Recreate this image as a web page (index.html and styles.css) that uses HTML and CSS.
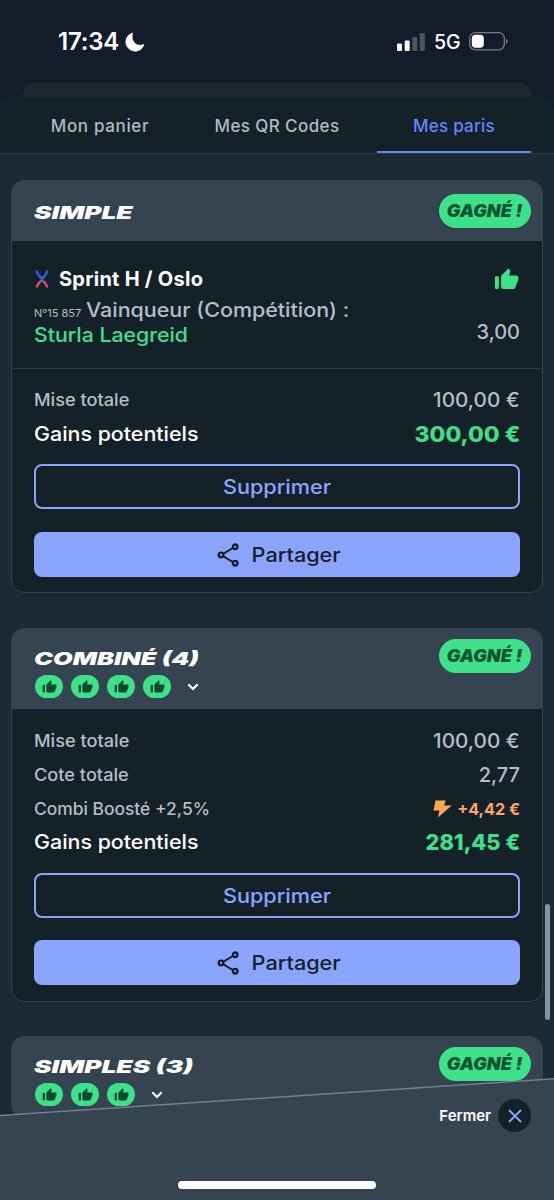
FILE: index.html
```html
<!DOCTYPE html>
<html lang="fr">
<head>
<meta charset="utf-8">
<title>Mes paris</title>
<link rel="stylesheet" href="styles.css">
</head>
<body>
<svg class="defs" width="0" height="0">
  <symbol id="thumb" viewBox="0 0 24 22"><path d="M2 8.2h1.2q1.2 0 1.2 1.2v10.4q0 1.2-1.2 1.2H1.600q-1.200 0-1.200-1.200V9.400q0-1.200 1.200-1.200zM6.600 8.800q0-1 .7-1.700L14 .5l1.200 1.200q.6.6.4 1.500l-.9 4.300h7q2.200 0 2.200 2.200v1.500q0 .5-.2 1l-3.100 7.500q-.6 1.300-2 1.300H8.800q-2.200 0-2.200-2.200z" fill="currentColor"/></symbol>
  <symbol id="share" viewBox="0 0 24 26"><path d="M6.500 11.700 15.700 6M6.500 14.300l9.200 5.700" fill="none" stroke="currentColor" stroke-width="2"/><g fill="none" stroke="currentColor" stroke-width="2.300"><circle cx="4" cy="13" r="2.300"/><circle cx="18.200" cy="4.800" r="2.300"/><circle cx="18.200" cy="21.200" r="2.300"/></g></symbol>
  <symbol id="chevron" viewBox="0 0 12 8"><path d="M1.300 1.300 6 6l4.700-4.700" fill="none" stroke="currentColor" stroke-width="2"/></symbol>
</svg>
<div class="screen">
  <header class="status">
    <span class="clock">17:34</span>
    <svg class="moon" width="20" height="20" viewBox="0 0 20 20"><path d="M7.600.9A9.300 9.300 0 1 0 19 12.600Q13 14.500 9.500 11 6 7.500 7.600.9z" fill="#fff" stroke="#fff" stroke-width=".6" stroke-linejoin="round"/></svg>
    <svg class="signal" width="28" height="18" viewBox="0 0 28 18"><g fill="#fff"><rect y="10.500" width="5" height="7.500" rx="1.300"/><rect x="7.700" y="7.500" width="5" height="10.500" rx="1.300"/><g opacity=".25"><rect x="15.300" y="4" width="5" height="14" rx="1.300"/><rect x="22.800" width="5" height="18" rx="1.300"/></g></g></svg>
    <span class="network">5G</span>
    <svg class="battery" width="39" height="19" viewBox="0 0 39 19"><rect x=".7" y=".7" width="34.600" height="17.100" rx="5.500" fill="none" stroke="#747b86" stroke-width="1.300"/><path d="M37 6.500q1.600.7 1.600 2.700T37 12z" fill="#747b86"/><rect x="2.800" y="2.800" width="12" height="13" rx="3.800" fill="#fff"/></svg>
  </header>
  <div class="back-sheet"></div>
  <main class="sheet">
    <nav class="tabs">
      <a class="tab"><span class="t-panier">Mon panier</span></a>
      <a class="tab"><span class="t-qr">Mes QR Codes</span></a>
      <a class="tab active"><span class="t-paris">Mes paris</span></a>
    </nav>
    <div class="list">
      <article class="card">
        <div class="head"><div><h2 class="title"><span class="w-simple">SIMPLE</span></h2></div><span class="badge"><b>GAGNÉ !</b></span></div>
        <div class="bet">
          <div class="event">
            <svg class="sport" width="14" height="18" viewBox="0 0 14 18"><defs><linearGradient id="ski" x2="0" y2="1"><stop offset=".5" stop-color="#2d60d8"/><stop offset=".75" stop-color="#e64862"/></linearGradient></defs><path d="M2 1.500q.3 1.500 1.300 3L10.700 14l1.300 2.500M12 1.500q-.3 1.500-1.300 3L3.300 14 2 16.500" fill="none" stroke="url(#ski)" stroke-width="2.500" stroke-linecap="round"/></svg>
            <span class="event-name">Sprint H / Oslo</span>
            <svg class="won" width="25" height="22"><use href="#thumb"/></svg>
          </div>
          <div class="pick">
            <div class="pick-text"><div class="market"><small>N°15 857</small><span>Vainqueur (Compétition) :</span></div><div class="winner"><span>Sturla Laegreid</span></div></div>
            <span class="odds">3,00</span>
          </div>
        </div>
        <div class="totals">
          <div class="row"><span class="label">Mise totale</span><span class="value">100,00 €</span></div>
          <div class="row gain"><span class="label">Gains potentiels</span><span class="value">300,00 €</span></div>
          <button class="btn outline"><span>Supprimer</span></button>
          <button class="btn solid"><svg width="24" height="26"><use href="#share"/></svg><span>Partager</span></button>
        </div>
      </article>
      <article class="card combo">
        <div class="head tall"><div><h2 class="title"><span class="w-combine">COMBINÉ (4)</span></h2>
          <div class="results"><i><svg width="15" height="13"><use href="#thumb"/></svg></i><i><svg width="15" height="13"><use href="#thumb"/></svg></i><i><svg width="15" height="13"><use href="#thumb"/></svg></i><i><svg width="15" height="13"><use href="#thumb"/></svg></i><svg class="chevron" width="12" height="8"><use href="#chevron"/></svg></div></div><span class="badge"><b>GAGNÉ !</b></span></div>
        <div class="totals">
          <div class="row"><span class="label">Mise totale</span><span class="value">100,00 €</span></div>
          <div class="row"><span class="label">Cote totale</span><span class="value odd-total">2,77</span></div>
          <div class="row"><span class="label boost-label">Combi Boosté +2,5%</span><span class="boost"><svg width="19" height="18" viewBox="0 0 19 18"><path d="M2.500.5h10.300L11 5.500h7.700L5 17.500l1.500-7H.5z" fill="#fda751"/></svg><span>+4,42 €</span></span></div>
          <div class="row gain"><span class="label">Gains potentiels</span><span class="value second">281,45 €</span></div>
          <button class="btn outline"><span>Supprimer</span></button>
          <button class="btn solid"><svg width="24" height="26"><use href="#share"/></svg><span>Partager</span></button>
        </div>
      </article>
      <article class="card last">
        <div class="head tall"><div><h2 class="title"><span class="w-simples">SIMPLES (3)</span></h2>
          <div class="results"><i><svg width="15" height="13"><use href="#thumb"/></svg></i><i><svg width="15" height="13"><use href="#thumb"/></svg></i><i><svg width="15" height="13"><use href="#thumb"/></svg></i><svg class="chevron" width="12" height="8"><use href="#chevron"/></svg></div></div><span class="badge"><b>GAGNÉ !</b></span></div>
      </article>
    </div>
  </main>
  <div class="scrollbar"></div>
  <footer class="bottom">
    <svg class="slope" width="554" height="122" viewBox="0 0 554 122"><path d="M0 37.500 554 .8V122H0z" fill="#354450"/><path d="M0 37.500 554 .8" stroke="#71808c" stroke-width="1.400"/></svg>
    <div class="close"><span>Fermer</span><div class="close-btn"><svg width="14" height="14" viewBox="0 0 14 14"><path d="m1 1 12 12M13 1 1 13" stroke="#8ba5ff" stroke-width="1.800"/></svg></div></div>
    <div class="home"></div>
  </footer>
</div>
</body>
</html>
```

FILE: styles.css
```css
* { box-sizing: border-box; }
body { margin: 0; background: #131c2b; font-family: Inter, "Liberation Sans", sans-serif; font-weight: 500; }
.defs { position: absolute; }
.screen { position: relative; width: 554px; height: 1200px; overflow: hidden; display: flex; flex-direction: column; white-space: nowrap; }
.status { height: 83px; flex: none; display: flex; align-items: center; padding: 0 46px 0 58px; color: #fff; }
.clock { font-size: 24px; font-weight: 600; letter-spacing: -.2px; width: 66px; }
.moon { margin-left: 1px; }
.signal { margin-left: auto; }
.network { font-size: 19.500px; width: 27px; margin: 0 8px 0 9px; }
.back-sheet { height: 14px; flex: none; margin: 0 23px; background: #20282f; border-radius: 12px 12px 0 0; }
.sheet { flex: 1; min-height: 0; background: #1b2a34; border-radius: 14px 14px 0 0; overflow: hidden; }
.tabs { height: 57px; display: flex; gap: 23px; padding: 0 23px; background: #152129; border-bottom: 1px solid #2c3a43; }
.tab { flex: 1; display: flex; justify-content: center; align-items: center; padding-top: 4px; font-size: 17px; color: #b2bac3; border-bottom: 2px solid transparent; }
.tab.active { color: #6585f6; border-color: #6585f6; }
.t-panier { letter-spacing: .65px; }
.t-qr { letter-spacing: .4px; }
.t-paris { letter-spacing: .25px; }
.list { display: flex; flex-direction: column; gap: 35px; padding: 26px 11px 0; }
.card { border: 1px solid #33424d; border-radius: 13px; background: #152129; overflow: hidden; flex: none; }
.head { height: 60px; background: #354450; display: flex; justify-content: space-between; align-items: flex-start; padding: 13px 11px 0 22px; }
.head.tall { height: 80px; padding-top: 10px; }
.title { margin: 0; padding-top: 8px; height: 35px; font-size: 18px; line-height: 22px; font-weight: 900; font-style: italic; color: #fff; }
.tall .title { height: 36px; padding-top: 9px; }
.title span { display: inline-block; transform-origin: 0 50%; transform: scaleX(1.46); }
.title .w-combine { transform: scaleX(1.41); }
.badge { width: 92px; height: 34px; border-radius: 17px; background: #3de18a; color: #045331; display: flex; align-items: center; justify-content: center; font-size: 17px; font-style: italic; padding-bottom: 1px; }
.badge b { font-weight: 900; transform: scaleX(1.06); }
.results { display: flex; gap: 8px; align-items: center; padding-left: 1px; }
.results i { width: 28px; height: 23px; border-radius: 12px; background: #3de18a; color: #064b30; display: flex; align-items: center; justify-content: center; }
.chevron { color: #fff; margin-left: 8px; }
.bet { height: 128px; border-bottom: 1px solid #2b3841; padding: 24px 22px 0; }
.event { display: flex; align-items: center; height: 28px; color: #fff; font-weight: 700; font-size: 20px; }
.sport { margin-left: 1px; }
.event-name { margin-left: 10px; letter-spacing: .25px; }
.won { margin: 0 1px 0 auto; color: #3de18a; }
.pick { display: flex; justify-content: space-between; }
.pick-text { padding-top: 5px; font-size: 20px; }
.market, .winner { height: 24px; line-height: 24px; color: #b5bdc7; }
.market small { display: inline-block; width: 52px; font-size: 11px; font-weight: 400; }
.market span, .winner span { display: inline-block; transform-origin: 0 50%; transform: scaleX(1.073); }
.winner { padding-top: 1px; }
.winner, .winner span { color: #3de18a; }
.winner span { transform: scaleX(1.063); }
.odds { font-size: 20px; line-height: 24px; padding-top: 27px; color: #b5bdc7; }
.totals { padding: 14px 22px 15px; }
.row { height: 34px; display: flex; justify-content: space-between; align-items: center; color: #b5bdc7; font-size: 17px; }
.label { transform-origin: 0 50%; transform: scaleX(1.07); }
.boost-label { transform: scaleX(1.024); }
.value { font-size: 20px; transform-origin: 100% 50%; transform: scaleX(1.035); }
.odd-total { transform: none; }
.gain .label { color: #fff; font-size: 20px; }
.gain .value { color: #3de18a; font-weight: 800; font-size: 21.500px; transform: scaleX(1.065); }
.gain .second { transform: scaleX(1.015); }
.boost { display: flex; align-items: center; gap: 5px; color: #fda36c; font-size: 16.200px; font-weight: 700; }
.btn { display: flex; width: 100%; height: 45px; align-items: center; justify-content: center; gap: 14px; border-radius: 8px; padding: 0; font: 500 20px Inter, sans-serif; }
.btn span { transform: scaleX(1.082); }
.outline { margin-top: 13px; border: 2px solid #8ba5ff; background: transparent; color: #8ba5ff; }
.solid { margin-top: 23px; border: 0; background: #8ba5ff; color: #152129; }
.combo .totals { padding: 15px 22px 16px; }
.combo .gain { height: 32px; }
.combo .outline { margin-top: 15px; }
.combo .solid { margin-top: 22px; }
.combo + .last { margin-top: -1px; }
.scrollbar { position: absolute; left: 545px; top: 904px; width: 5px; height: 116px; border-radius: 3px; background: #89939b; }
.bottom { position: absolute; left: 0; right: 0; bottom: 0; height: 122px; }
.slope { position: absolute; inset: 0; }
.close { position: relative; display: flex; justify-content: flex-end; align-items: center; gap: 7px; padding: 21px 23px 0 0; color: #fff; font-size: 15px; font-weight: 600; }
.close-btn { width: 33px; height: 33px; border-radius: 50%; background: #152129; display: flex; align-items: center; justify-content: center; }
.home { position: absolute; left: 178px; bottom: 11px; width: 198px; height: 8px; border-radius: 4px; background: #fff; }
```
